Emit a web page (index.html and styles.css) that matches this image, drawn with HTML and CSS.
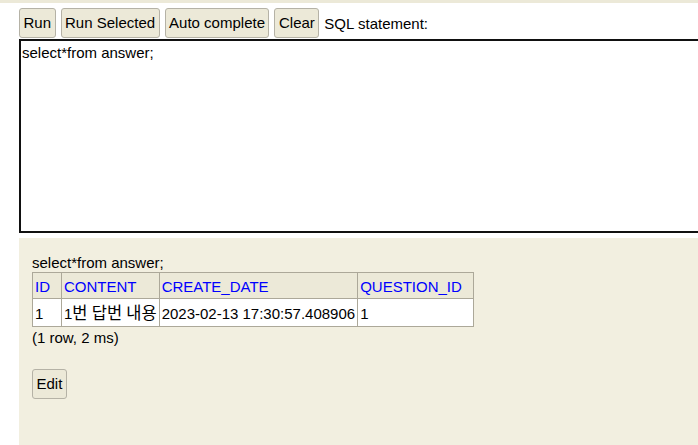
FILE: index.html
```html
<!DOCTYPE html>
<html lang="en">
<head>
    <meta charset="UTF-8">
    <title>H2 Console</title>
    <link rel="stylesheet" href="styles.css">
</head>
<body>
    <div class="top-strip"></div>
    <div class="query">
        <div class="toolbar">
            <button class="btn">Run</button>
            <button class="btn">Run Selected</button>
            <button class="btn">Auto complete</button>
            <button class="btn">Clear</button>
            <span class="label">SQL statement:</span>
        </div>
        <div class="editor">
            <textarea class="sql" spellcheck="false">select*from answer;</textarea>
        </div>
    </div>
    <div class="result">
        <div class="statement">select*from answer;</div>
        <table class="result-set">
            <tr>
                <th>ID</th>
                <th>CONTENT</th>
                <th>CREATE_DATE</th>
                <th>QUESTION_ID</th>
            </tr>
            <tr>
                <td>1</td>
                <td>1<span class="ko">번</span> <span class="ko">답번</span> <span class="ko">내용</span></td>
                <td>2023-02-13 17:30:57.408906</td>
                <td>1</td>
            </tr>
        </table>
        <div class="status">(1 row, 2 ms)</div>
        <button class="btn edit">Edit</button>
    </div>
</body>
</html>
```

FILE: styles.css
```css
html, body {
    height: 100%;
}
body {
    margin: 0;
    font-family: "Liberation Sans", Arial, "Noto Sans CJK KR", sans-serif;
    font-size: 15px;
    line-height: 17px;
    color: #000;
    background-color: #fff;
    display: flex;
    flex-direction: column;
    overflow: hidden;
}
.top-strip {
    height: 3px;
    background-color: #ece9d8;
}
.query {
    padding: 5px 0 0 19px;
}
.toolbar {
    display: flex;
    align-items: center;
    gap: 5px;
    margin-bottom: 1px;
}
.btn {
    font-family: inherit;
    font-size: 15px;
    line-height: 18px;
    padding: 5px 3.5px;
    color: #000;
    background-color: #ece9d8;
    border: 1px solid #b5b2a6;
    border-radius: 3px;
    cursor: pointer;
}
.editor {
    overflow: hidden;
}
.sql {
    display: block;
    box-sizing: border-box;
    width: calc(100% + 20px);
    height: 194px;
    margin: 0;
    padding: 3px 1px;
    font-family: inherit;
    font-size: 15px;
    line-height: 17px;
    border: 2px solid #111;
    resize: none;
    outline: none;
}
.result {
    flex: 1;
    margin: 5px 0 0 19px;
    padding: 16px 13px 0;
    background-color: #f2efe0;
}
.statement {
    margin-bottom: 1px;
}
.result-set {
    border-collapse: collapse;
    border: 1px solid #aca899;
}
.result-set th,
.result-set td {
    border: 1px solid #aca899;
    text-align: left;
    white-space: nowrap;
    line-height: 19px;
    font-weight: normal;
}
.result-set th {
    padding: 4px 11px 2px 2px;
    color: #0000ff;
    background-color: #ece9d8;
}
.result-set td {
    padding: 5px 2px 3px;
    background-color: #fff;
}
.ko {
    font-family: "Noto Sans CJK KR", sans-serif;
    font-size: 16.5px;
    line-height: 1;
}
.status {
    margin-top: 2px;
}
.edit {
    margin-top: 23px;
}
```
